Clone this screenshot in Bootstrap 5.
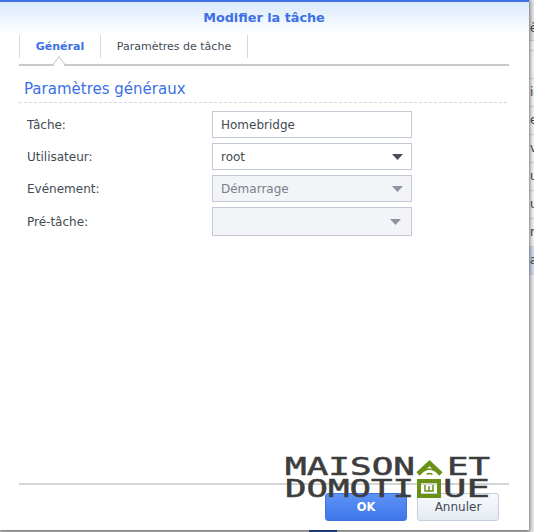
<!DOCTYPE html>
<html lang="fr">
<head>
<meta charset="utf-8">
<title>Modifier la tâche</title>
<link href="https://cdn.jsdelivr.net/npm/bootstrap@5.3.0/dist/css/bootstrap.min.css" rel="stylesheet">
<style>
html,body{height:532px;overflow:hidden}
body{background:#e9ebee;font-family:"DejaVu Sans",Verdana,sans-serif;font-size:11.5px;color:#414b55;position:relative}
.desk{height:532px;width:534px}
.dlg{width:529px;height:530px;flex:none;background:#fff;border-top:2px solid #3f70e4;box-shadow:0 1px 4px 1px rgba(0,0,0,.55);position:relative;z-index:2;padding:0 20px 0 19px}
.dlg-title{height:31px;margin:0 -20px 0 -19px;padding-right:1px;background:linear-gradient(#d9e9fc,#fff);color:#3b70e6;font-size:12.8px;font-weight:700;line-height:32px;text-align:center}
.tabbar{height:33px;padding-top:2px;border-bottom:2px solid #c9c9c9;position:relative}
.tabbar .tabi{height:23px;line-height:24px;border-right:1px solid #d3d8e0;color:#414b55;font-size:11px;text-decoration:none;display:block}
.tabbar .li1 .tabi{border-left:1px solid #d3d8e0;width:82px;text-align:center;color:#3b70e6;font-weight:700}
.tabbar .li2 .tabi{width:147px;text-align:center}
.notch{position:absolute;left:35px;top:26px;width:10px;height:10px;background:#fff;border-left:1px solid #c9c9c9;border-top:1px solid #c9c9c9;transform:rotate(45deg) skew(8deg,8deg)}
.sect{color:#3b70e6;font-size:15px;line-height:20px;padding:13px 0 3px 5px;border-bottom:1px dashed #cfd8e6;margin-right:2px;height:37px}
.frm{padding:8px 0 0 8px;gap:5px}
.frm-row{height:27px}
.frm-row label{width:185px;flex:none;font-size:12px;color:#414b55}
.frm-row .form-control,.frm-row .form-select{width:200px;height:27px;flex:none;border:1px solid #c3cad6;border-radius:0;padding:0 8px;font-family:inherit;font-size:12px;color:#414b55;box-shadow:none}
.frm-row .form-select{background-position:right 8px center;background-size:11px 6px;background-image:url("data:image/svg+xml,%3Csvg xmlns='http://www.w3.org/2000/svg' viewBox='0 0 11 6'%3E%3Cpath d='M0 0h11L5.500 6z' fill='%234a4f5a'/%3E%3C/svg%3E")}
.frm-row .form-select:disabled{background-color:#f3f4f8;color:#777f89;background-image:url("data:image/svg+xml,%3Csvg xmlns='http://www.w3.org/2000/svg' viewBox='0 0 11 6'%3E%3Cpath d='M0 0h11L5.500 6z' fill='%238f96a2'/%3E%3C/svg%3E")}
.frm-row.last{height:29px}
.frm-row.last .form-select{height:29px;background-position:right 10px center}
.ftr{position:absolute;left:19px;right:20px;top:481px;border-top:2px solid #d4d4d4;padding:8px 10px 0 0;gap:10px}
.ftr .btn{width:82px;height:28px;padding:0;font-size:12px;border-radius:3px;line-height:26px}
.ftr .btn-ok{background:linear-gradient(#5d93f5,#3f76ea);border:1px solid #3f74e0;color:#fff;font-weight:700;font-size:11.5px}
.btn-no{background:linear-gradient(#f7f9fc,#e6ecf4);border:1px solid #c3cedb;color:#414b55}
.strip{flex:1;overflow:hidden;font-size:12px;color:#444}
.strip .rw{height:28px;line-height:27px;border-bottom:1px solid #d5d7db;background:#f4f5f7;padding-left:1px;white-space:nowrap}
.strip .rw.hd{height:41px;background:#e3e5e9;line-height:56px;border-bottom-color:#c8cad0}
.strip .rw.sp{height:10px}
.strip .rw.sel{background:#cfdcf0}
.under{position:absolute;left:309px;top:530px;width:28px;height:2px;background:#2f5fc0}
.logo{position:absolute;left:283px;top:456px;width:210px;height:44px;z-index:3;pointer-events:none}
.logo text{font-family:"DejaVu Sans Mono",monospace;font-size:24px;fill:#3d3d3d;stroke:#3d3d3d;stroke-width:.5px}
</style>
</head>
<body>
<div class="desk d-flex">
  <div class="dlg">
    <div class="dlg-title">Modifier la tâche</div>
    <div class="tabbar">
      <ul class="list-unstyled d-flex m-0">
        <li class="li1"><a class="tabi" href="#">Général</a></li>
        <li class="li2"><a class="tabi" href="#">Paramètres de tâche</a></li>
      </ul>
      <span class="notch"></span>
    </div>
    <div class="sect">Paramètres généraux</div>
    <form class="frm d-flex flex-column">
      <div class="frm-row d-flex align-items-center"><label for="f1">Tâche:</label><input id="f1" class="form-control" value="Homebridge"></div>
      <div class="frm-row d-flex align-items-center"><label for="f2">Utilisateur:</label><select id="f2" class="form-select"><option>root</option></select></div>
      <div class="frm-row d-flex align-items-center"><label for="f3">Evénement:</label><select id="f3" class="form-select" disabled><option>Démarrage</option></select></div>
      <div class="frm-row last d-flex align-items-center"><label for="f4">Pré-tâche:</label><select id="f4" class="form-select" disabled><option></option></select></div>
    </form>
    <div class="ftr d-flex justify-content-end">
      <button type="button" class="btn btn-ok">OK</button>
      <button type="button" class="btn btn-no">Annuler</button>
    </div>
  </div>
  <div class="strip">
    <div class="rw hd">è</div>
    <div class="rw sp"></div>
    <div class="rw">&nbsp;</div>
    <div class="rw">io</div>
    <div class="rw">er</div>
    <div class="rw">v</div>
    <div class="rw">u</div>
    <div class="rw">u</div>
    <div class="rw">r</div>
    <div class="rw sel">ar</div>
  </div>
</div>
<div class="under"></div>
<svg class="logo" viewBox="0 0 210 44" aria-label="Maison et Domotique">
  <text x="2" y="19" textLength="130" lengthAdjust="spacingAndGlyphs">MAISON</text>
  <text x="164" y="19" textLength="43" lengthAdjust="spacingAndGlyphs">ET</text>
  <text x="2" y="41" textLength="129" lengthAdjust="spacingAndGlyphs">DOMOTI</text>
  <text x="160" y="41" textLength="47" lengthAdjust="spacingAndGlyphs">UE</text>
  <g fill="none" stroke="#6b9016">
    <path d="M135 18 146.500 7 158 18" stroke-width="4.500"/>
    <path d="M141 15q5.500-4 11 0M143.500 18.500q3-2 6 0" stroke-width="1.500"/>
    <path d="M136 25h20v15h-20z" stroke-width="4"/>
    <path d="M142 29v6h8v-6M146 30v5" stroke-width="1.500"/>
  </g>
</svg>
</body>
</html>
